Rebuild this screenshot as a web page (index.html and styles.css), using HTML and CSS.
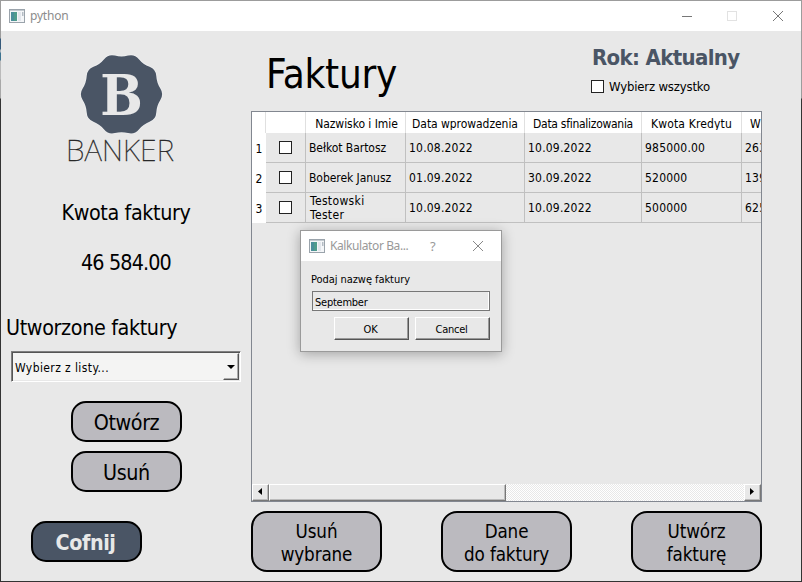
FILE: index.html
```html
<!DOCTYPE html>
<html lang="pl">
<head>
<meta charset="utf-8">
<title>python</title>
<link rel="stylesheet" href="styles.css">
</head>
<body>
<div class="window">
  <header class="titlebar">
    <svg class="app-icon" width="16" height="14" viewBox="0 0 16 14"><rect x=".5" y=".5" width="15" height="13" fill="#f4f6f8" stroke="#9aa3ab"/><path d="M1 1.5h14" stroke="#c3cad0"/><rect x="2" y="3" width="6" height="9" fill="#4f9c8c"/><path d="M2 3h3v9H2z" fill="#4a8f9a"/><rect x="9" y="3" width="3" height="9" fill="#e2e6ec"/><rect x="13" y="3" width="1.5" height="4" fill="#b4bcc4"/></svg>
    <span class="app-name">python</span>
    <svg class="controls" width="110" height="14" viewBox="0 0 110 14" fill="none"><path d="M1 7.5h10" stroke="#777"/><rect x="46.500" y="2.500" width="9" height="9" stroke="#e2e2e2"/><path d="M92 2l10 10M102 2L92 12" stroke="#777"/></svg>
  </header>
  <div class="content">
    <aside class="side">
      <svg class="logo" width="124" height="116" viewBox="60 50 124 116">
        <path transform="translate(121.500 94.300)" fill="#4a5565" stroke="#f1f2f3" stroke-width="1.200" paint-order="stroke" d="M38.850-5.700Q42.500 0 38.850 5.700Q35.200 11.400 34.800 18.200Q34.400 25 28.050 27.450Q21.700 29.900 17.400 35.150Q13.100 40.400 6.550 38.700Q0 37-6.550 38.700Q-13.100 40.400-17.400 35.150Q-21.700 29.900-28.050 27.450Q-34.400 25-34.800 18.200Q-35.200 11.400-38.850 5.700Q-42.500 0-38.850-5.700Q-35.200-11.400-34.800-18.200Q-34.400-25-28.050-27.450Q-21.700-29.900-17.400-35.150Q-13.100-40.400-6.550-38.700Q0-37 6.550-38.700Q13.100-40.400 17.400-35.150Q21.700-29.900 28.050-27.450Q34.400-25 34.800-18.200Q35.200-11.400 38.850-5.700Z"/>
        <text class="logo-letter" x="121.500" y="115" text-anchor="middle">B</text>
        <text class="logo-name" x="66" y="161">BANKER</text>
      </svg>
      <p class="line amount-label">Kwota faktury</p>
      <p class="line amount">46 584.00</p>
      <p class="line created-label">Utworzone faktury</p>
      <div class="combo"><span>Wybierz z listy...</span><i class="drop"><svg width="8" height="4" viewBox="0 0 8 4"><path d="M0 0h8L4 4z"/></svg></i></div>
      <button class="btn open">Otwórz</button>
      <button class="btn remove">Usuń</button>
      <button class="btn back">Cofnij</button>
    </aside>
    <main class="main">
      <div class="head">
        <h1>Faktury</h1>
        <div class="filters">
          <div class="year">Rok: Aktualny</div>
          <label class="all"><i class="check"></i><span>Wybierz wszystko</span></label>
        </div>
      </div>
      <div class="table">
        <div class="row thead"><b></b><b></b><b><span class="h1c">Nazwisko i Imie</span></b><b><span>Data wprowadzenia</span></b><b><span class="h3c">Data sfinalizowania</span></b><b><span class="h4c">Kwota Kredytu</span></b><b class="cut"><span>W</span></b></div>
        <div class="row"><em>1</em><div class="pick"><i class="check"></i></div><div class="name">Bełkot Bartosz</div><div>10.08.2022</div><div>10.09.2022</div><div>985000.00</div><div>263</div></div>
        <div class="row"><em>2</em><div class="pick"><i class="check"></i></div><div class="name">Boberek Janusz</div><div>01.09.2022</div><div>30.09.2022</div><div>520000</div><div>139</div></div>
        <div class="row"><em>3</em><div class="pick"><i class="check"></i></div><div class="two">Testowski<br>Tester</div><div>10.09.2022</div><div>10.09.2022</div><div>500000</div><div>625</div></div>
        <div class="scroll">
          <i class="arrow"><svg width="4" height="7" viewBox="0 0 4 7"><path d="M4 0v7L0 3.500z"/></svg></i>
          <i class="thumb"></i><i class="track"></i>
          <i class="arrow"><svg width="4" height="7" viewBox="0 0 4 7"><path d="M0 0v7l4-3.500z"/></svg></i>
        </div>
      </div>
      <div class="actions">
        <button class="btn big">Usuń<br>wybrane</button>
        <button class="btn big">Dane<br>do faktury</button>
        <button class="btn big">Utwórz<br>fakturę</button>
      </div>
    </main>
  </div>
  <section class="dialog">
    <header class="dialog-title">
      <svg class="app-icon" width="16" height="14" viewBox="0 0 16 14"><rect x=".5" y=".5" width="15" height="13" fill="#f4f6f8" stroke="#9aa3ab"/><path d="M1 1.500h14" stroke="#c3cad0"/><rect x="2" y="3" width="6" height="9" fill="#4f9c8c"/><path d="M2 3h3v9H2z" fill="#4a8f9a"/><rect x="9" y="3" width="3" height="9" fill="#e2e6ec"/><rect x="13" y="3" width="1.500" height="4" fill="#b4bcc4"/></svg>
      <span class="dialog-name">Kalkulator Ba...</span>
      <span class="help">?</span>
      <svg width="12" height="12" viewBox="0 0 12 12"><path d="M1 1l10 10M11 1L1 11" stroke="#888"/></svg>
    </header>
    <div class="dialog-body">
      <span class="prompt">Podaj nazwę faktury</span>
      <div class="field">September</div>
      <div class="dialog-buttons"><button>OK</button><button>Cancel</button></div>
    </div>
  </section>
</div>
</body>
</html>
```
FILE: styles.css
```css
* { box-sizing: border-box; margin: 0; padding: 0; }
body {
  width: 802px; height: 582px; overflow: hidden; padding: 1px;
  background: linear-gradient(#9c9c9c 38px, #35597a 39px 49px, #a9b4bc 50px 52px, #3d7390 53px 60px, #bbb 61px 79px, #a8a8a8 80px 98px, #333 99px) left / 1px 100% no-repeat,
    linear-gradient(#9c9c9c 98px, #333 99px) right / 1px 100% no-repeat,
    linear-gradient(#9c9c9c 1px, #333 1px);
  font: 12px/15px "DejaVu Sans Condensed", "DejaVu Sans", sans-serif;
  color: #000;
}
i, em { font-style: normal; display: block; }
svg { display: block; flex: none; }
button { font: inherit; color: inherit; }
.window { width: 800px; height: 580px; background: #e8e8e8; display: flex; flex-direction: column; position: relative; }
.titlebar { height: 30px; flex: none; background: #fff; display: flex; align-items: center; padding: 0 10px 0 8px; }
.app-name { margin-left: 5px; font: 12px/16px "Noto Sans", sans-serif; color: #8c8c8c; flex: 1; letter-spacing: -.2px; }
.content { display: flex; flex: 1; }

.side { width: 250px; display: flex; flex-direction: column; padding-top: 19px; }
.logo { margin-left: 59px; overflow: visible; }
.logo-letter { font: 700 56px "DejaVu Serif Condensed", "DejaVu Serif", serif; fill: #e8e8e8; }
.logo-name { font: 100 30px "Noto Sans", sans-serif; fill: #222; stroke: #222; stroke-width: .3px; letter-spacing: .15px; }
.line { font-size: 21.33px; line-height: 30px; width: 250px; text-align: center; white-space: nowrap; }
.amount-label { margin-top: 32px; letter-spacing: -.38px; }
.amount { margin-top: 20px; letter-spacing: -.85px; }
.created-label { margin-top: 35px; text-align: left; padding-left: 5px; letter-spacing: -.36px; }
.combo {
  margin: 8px 0 0 10px; width: 230px; height: 31px; display: flex; align-items: center; justify-content: space-between;
  background: #f4f4f3; border: 1px solid; border-color: #808080 #fff #fff #808080;
  box-shadow: inset 1px 1px #555, inset -1px -1px #e8e8e8; padding: 1px 1px 1px 3px; letter-spacing: .4px;
}
.combo span { padding-top: 3px; }
.drop {
  width: 16px; height: 27px; background: #f4f4f3; display: flex; align-items: center; justify-content: center;
  border: 1px solid; border-color: #f4f4f3 #555 #555 #f4f4f3; box-shadow: inset -1px -1px #aaa;
}
.btn {
  background: #bbbabf; border: 2px solid #000; border-radius: 15px; width: 111px; height: 41px;
  font-size: 21.33px; line-height: 24px; padding-top: 2px; letter-spacing: -.4px;
}
.open { margin: 19px 0 0 70px; }
.remove { margin: 9px 0 0 70px; }
.back { margin: 29px 0 0 30px; padding-right: 2px; background: #4a5565; color: #e8e8e8; font-weight: 700; }

.main { width: 511px; display: flex; flex-direction: column; }
.head { height: 80px; display: flex; justify-content: space-between; }
h1 { font-size: 40px; font-weight: 400; line-height: 48px; letter-spacing: -.27px; margin: 19px 0 0 15px; }
.filters { width: 171px; padding-top: 15px; }
.year { font-size: 22px; line-height: 24px; font-weight: 700; letter-spacing: -.65px; color: #4a5565; white-space: nowrap; padding-left: 1px; }
.all { display: flex; align-items: center; margin-top: 8px; font-size: 13px; letter-spacing: -.17px; }
.all span { margin-left: 5px; padding-top: 1px; }
.check { width: 13px; height: 13px; background: #fff; border: 1px solid #222; flex: none; }

.table { height: 391px; border: 1px solid #828790; display: flex; flex-direction: column; overflow: hidden; }
.row { display: grid; grid-template-columns: 14px 40px 100px 119px 117px 100px 19px; height: 30px; flex: none; letter-spacing: .2px; white-space: nowrap; }
.row > div { border: solid #c0c0c0; border-width: 0 1px 1px 0; padding: 1px 0 0 3px; display: flex; align-items: center; overflow: hidden; }
.row > div:last-child { border-right: 0; }
.row em { background: #fff; display: flex; align-items: center; justify-content: center; padding-top: 2px; }
.row .pick { padding: 0 0 0 13px; }
.row .name { letter-spacing: -.05px; }
.row .two { line-height: 14px; letter-spacing: .35px; padding-left: 4px; }
.thead { height: 21px; background: #fff; letter-spacing: -.05px; }
.thead b { font-weight: 400; border-right: 1px solid #e0e0e0; display: flex; justify-content: center; padding-top: 6px; }
.thead b:last-child { border: 0; }
.thead span { line-height: 13px; height: 12px; overflow: hidden; }
.h1c { padding-left: 2px; }
.thead .h3c { letter-spacing: -.28px; }
.thead .h4c { letter-spacing: .15px; }
.thead .cut { justify-content: flex-start; padding-left: 8px; overflow: hidden; }
.scroll { margin-top: auto; height: 17px; display: flex; flex: none; }
.arrow, .thumb { border: 1px solid; border-color: #fff #777 #777 #fff; background: #e8e8e8; box-shadow: inset -1px -1px #bbb; }
.arrow { width: 17px; display: flex; align-items: center; justify-content: center; padding: 0 1px 2px 0; }
.thumb { width: 237px; }
.track { flex: 1; background: repeating-conic-gradient(#fff 0 25%, #e8e8e8 0 50%) 0 0 / 2px 2px; }

.actions { display: flex; justify-content: space-between; margin-top: 9px; }
.big { width: 131px; height: 61px; font-size: 18.67px; line-height: 23px; padding-top: 3px; letter-spacing: -.12px; border-radius: 16px; }

.dialog {
  position: absolute; left: 299px; top: 229px; width: 202px; height: 122px; background: #e8e8e8;
  border: 1px solid #9a9a9a; box-shadow: 0 2px 12px rgba(0, 0, 0, .3); font-size: 11px;
}
.dialog-title { height: 30px; background: #fff; display: flex; align-items: center; padding: 0 17px 0 8px; color: #999; font: 12px/16px "Noto Sans", sans-serif; }
.dialog-name { margin-left: 5px; width: 84px; letter-spacing: -.4px; white-space: nowrap; }
.help { margin: 0 auto 0 16px; font-size: 13px; }
.dialog-body { padding: 11px 11px 0 10px; letter-spacing: -.06px; }
.prompt { display: block; line-height: 16px; }
.field { height: 20px; margin: 3px 0 6px 1px; border: 1px solid #777; box-shadow: inset -1px -1px #fff; line-height: 21px; padding-left: 2px; letter-spacing: -.25px; }
.dialog-buttons { display: flex; justify-content: flex-end; gap: 6px; }
.dialog-buttons button { width: 75px; height: 23px; background: #e8e8e8; border: 1px solid; border-color: #fff #555 #555 #fff; box-shadow: inset -1px -1px #999; letter-spacing: -.25px; padding: 1px 2px 0 0; }
```
